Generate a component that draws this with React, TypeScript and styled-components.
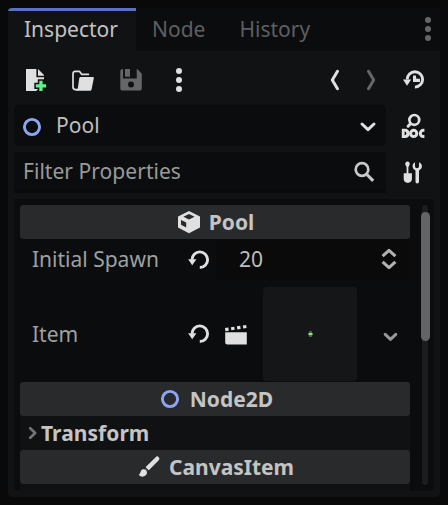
import React from "react";
import styled, { createGlobalStyle } from "styled-components";

const c = {
  base: "#090909",
  dark: "#0b0c0e",
  panel: "#111214",
  header: "#292a2c",
  icon: "#e0e0e0",
  muted: "#656668",
  accent: "#5b72c4",
  node: "#8da5f3",
};

const GlobalStyle = createGlobalStyle`
  * { box-sizing: border-box; }
  body {
    margin: 0;
    background: ${c.base};
    font-family: "Noto Sans", sans-serif;
    font-size: 21px;
    line-height: 30px;
    color: #bebebe;
  }
`;

const Dock = styled.main`
  width: 432px;
  height: 489px;
  margin: 8px;
  display: flex;
  flex-direction: column;
  background: ${c.panel};
  border-radius: 4px;
  overflow: hidden;
  white-space: nowrap;
`;

const TabBar = styled.div`
  height: 43px;
  flex: none;
  display: flex;
  background: ${c.dark};
`;

const Tab = styled.div<{ $active?: boolean }>`
  height: 43px;
  padding: 6px 18px 0 16px;
  border-top: 3px solid ${(p) => (p.$active ? c.accent : "transparent")};
  width: ${(p) => (p.$active ? "128px" : "auto")};
  background: ${(p) => (p.$active ? c.panel : "transparent")};
  color: ${(p) => (p.$active ? "#c2c2c2" : "#5e5f60")};
  line-height: 25px;
`;

const TabMenu = styled.div`
  margin: 9px 0 0 auto;
  display: flex;
`;

const Toolbar = styled.div`
  height: 54px;
  flex: none;
  display: flex;
  align-items: center;
  gap: 24px;
  padding: 4px 15px 0;
`;

const ToolGroup = styled.div<{ $gap: number }>`
  display: flex;
  gap: ${(p) => p.$gap}px;
  margin-left: auto;
`;

const FieldRow = styled.div`
  display: flex;
  flex: none;
  height: 41px;
  margin: 0 15px 6px 6px;
  justify-content: space-between;
  align-items: center;
`;

const Field = styled.div<{ $line?: boolean }>`
  width: 372px;
  height: 41px;
  border-radius: ${(p) => (p.$line ? "3px 3px 0 0" : "4px")};
  border-bottom: ${(p) => (p.$line ? "3px solid #090a0b" : "0")};
  background: ${c.dark};
  display: flex;
  align-items: center;
  padding: ${(p) => (p.$line ? "0 10px 0 9px" : "0 6px")};
  color: ${(p) => (p.$line ? "#999a9a" : "#bebebe")};
`;

const FieldText = styled.span<{ $indent?: boolean }>`
  flex: 1;
  margin-left: ${(p) => (p.$indent ? "12px" : "0")};
  padding-bottom: ${(p) => (p.$indent ? "2px" : "0")};
  letter-spacing: 0.04px;
`;

const Scroller = styled.section`
  width: 420px;
  height: 292px;
  margin: 0 6px;
  padding: 6px 6px 0;
  display: flex;
  justify-content: space-between;
  background: ${c.dark};
  border-radius: 4px;
`;

const Properties = styled.div`
  width: 390px;
  height: 286px;
  display: flex;
  flex-direction: column;
`;

const Category = styled.h2`
  margin: 0;
  height: 34px;
  flex: none;
  display: flex;
  align-items: center;
  justify-content: center;
  gap: 8px;
  padding-left: 1px;
  font-size: 21px;
  line-height: 34px;
  font-weight: 700;
  color: #c4c4c4;
  background: ${c.header};
  border-radius: 3px;
`;

const Property = styled.div<{ $h: number; $gap?: number }>`
  height: ${(p) => p.$h}px;
  margin-bottom: ${(p) => p.$gap || 0}px;
  flex: none;
  display: flex;
  align-items: center;
  color: #9fa0a0;
`;

const Label = styled.span<{ $raised?: boolean }>`
  width: 167px;
  padding-left: 12px;
  padding-bottom: ${(p) => (p.$raised ? "2px" : "0")};
  flex: none;
`;

const SpinBox = styled.div`
  flex: 1;
  height: 41px;
  margin-left: 5px;
  padding: 0 9px 2px 23px;
  display: flex;
  align-items: center;
  justify-content: space-between;
  background: #0a0a0a;
  border-radius: 4px;
  color: #bebebe;
`;

const Preview = styled.div`
  width: 94px;
  height: 94px;
  margin: 0 22px 0 16px;
  display: grid;
  place-items: center;
  background: #151618;
  border-radius: 4px;
`;

const Fold = styled.div`
  height: 34px;
  flex: none;
  display: flex;
  align-items: center;
  padding-left: 5px;
  background: #101113;
  font-weight: 700;
  letter-spacing: 0.05px;
  color: #c4c4c4;
`;

const Filler = styled.div`
  flex: 1;
  background: #101113;
`;

const Track = styled.div`
  width: 6px;
  height: 280px;
  background: #1b1c1e;
  border-radius: 3px;
  display: flex;
  justify-content: center;
`;

const Thumb = styled.div`
  width: 9px;
  height: 129px;
  flex: none;
  margin-top: 7px;
  background: #636466;
  border-radius: 4.5px;
`;

const Svg = styled.svg<{ $dy?: number }>`
  display: block;
  flex: none;
  margin-top: ${(p) => p.$dy || 0}px;
`;

type IconProps = { children: React.ReactNode; w?: number; h?: number; dy?: number };
const Icon = ({ children, w = 24, h = 24, dy }: IconProps) => (
  <Svg width={w} height={h} viewBox={`0 0 ${w} ${h}`} fill="none" $dy={dy}>
    {children}
  </Svg>
);

const line = { strokeLinecap: "round" as const, strokeLinejoin: "round" as const, strokeWidth: 3 };

const Dots = ({ color }: { color: string }) => (
  <Icon>
    {[3, 12, 21].map((y) => (
      <circle key={y} cx="12" cy={y} r="3" fill={color} />
    ))}
  </Icon>
);

const NodeRing = ({ dy }: { dy?: number }) => (
  <Icon dy={dy}>
    <circle cx="12" cy="12" r="7.6" stroke={c.node} strokeWidth="2.9" />
  </Icon>
);

const Revert = () => (
  <Icon>
    <path d="M5 11.7a7.8 7.8 0 1 1 7.8 7.8" stroke={c.icon} strokeWidth="2.9" />
    <path d="M1.1 11.2h8.3l-4.2 6z" fill={c.icon} />
  </Icon>
);

export default function App() {
  return (
    <>
      <GlobalStyle />
      <Dock>
        <TabBar>
          <Tab $active>Inspector</Tab>
          <Tab>Node</Tab>
          <Tab>History</Tab>
          <TabMenu>
            <Dots color={c.muted} />
          </TabMenu>
        </TabBar>

        <Toolbar>
          <Icon>
            <path d="M3 1h10.4v8.2H21V17l-8 6H3z" fill={c.icon} />
            <path d="M15 1l6 6v.8h-6z" fill={c.icon} />
            <path
              d="M16.3 12.8h3.3v3.5h3.5v3.3h-3.5v3.5h-3.3v-3.5h-3.5v-3.3h3.5z"
              fill="#62f088"
              stroke={c.panel}
              strokeWidth="3"
              paintOrder="stroke"
            />
          </Icon>
          <Icon>
            <path
              d="M7.2 21.6H4.5A2.6 2.6 0 0 1 2 19V5.6A2.4 2.4 0 0 1 4.4 3.4h4.2l2.2 3h6.6"
              stroke={c.icon}
              strokeWidth="1.7"
              strokeLinejoin="round"
              strokeLinecap="round"
            />
            <path d="M9.5 9h12.3a1 1 0 0 1 1 1.2l-2.2 11a1.8 1.8 0 0 1-1.8 1.5H4.8C6.4 22 6.7 21 7 19l1.2-8.6A1.5 1.5 0 0 1 9.5 9z" fill={c.icon} />
          </Icon>
          <Icon>
            <path
              d="M4 1v9.5h13.7V1h.6l4.5 4.7V20a2.6 2.6 0 0 1-2.6 2.6H4A2.6 2.6 0 0 1 1.3 20V3.6A2.6 2.6 0 0 1 4 1z"
              fill={c.muted}
            />
            <path d="M6 1h5v7.8H6z" fill={c.muted} />
            <circle cx="12" cy="16.5" r="3" fill={c.panel} />
          </Icon>
          <Dots color={c.icon} />
          <ToolGroup $gap={12}>
            <Icon>
              <path d="M20.5 3.3L15.3 12l5.2 8.7" stroke={c.icon} {...line} />
            </Icon>
            <Icon>
              <path d="M15.5 3.3l5.2 8.7-5.2 8.7" stroke={c.muted} {...line} />
            </Icon>
          </ToolGroup>
          <Icon>
            <path d="M6.2 11.4a7.7 7.7 0 1 1 7.7 7.7" stroke={c.icon} strokeWidth="2.9" />
            <path d="M2 11.6h8.2L6 17.8z" fill={c.icon} />
            <path d="M12 7.5h2.8l.6 3.2H19V14h-7z" fill={c.icon} />
          </Icon>
        </Toolbar>

        <FieldRow>
          <Field>
            <NodeRing dy={2} />
            <FieldText $indent>Pool</FieldText>
            <Icon dy={3}>
              <path d="M6 9l6 5.7L18 9" stroke={c.icon} {...line} />
            </Icon>
          </Field>
          <Icon h={27}>
            <circle cx="13.3" cy="7.9" r="4.9" stroke={c.icon} strokeWidth="2.7" />
            <path d="M9.6 11.6l-2.5 2.6" stroke={c.icon} strokeWidth="3" strokeLinecap="round" />
            <path
              fillRule="evenodd"
              d="M.8 16.8h3.4a4.6 4.6 0 0 1 0 9.2H.8zM3.6 19.6v3.6a1.8 1.8 0 0 0 0-3.6z"
              fill={c.icon}
            />
            <circle cx="12.7" cy="21.4" r="3.1" stroke={c.icon} strokeWidth="3" />
            <path d="M23.4 18.3h-1a3.1 3.1 0 0 0 0 6.2h1" stroke={c.icon} strokeWidth="3" />
          </Icon>
        </FieldRow>

        <FieldRow>
          <Field $line>
            <FieldText>Filter Properties</FieldText>
            <Icon dy={1}>
              <circle cx="10" cy="9.5" r="6.3" stroke="#c8c8c8" strokeWidth="2.7" />
              <path d="M14.4 14l6.8 6.9" stroke="#c8c8c8" strokeWidth="3.1" />
            </Icon>
          </Field>
          <Icon h={25}>
            <path d="M6.5 1.6c1.7 0 2.4 1.4 2.2 3L7.4 7.3v5.9h3.5v6.4a4.2 4.2 0 0 1-8.2 0v-6.4h2.9V7.3L4.3 4.6c-.2-1.6.5-3 2.2-3z" fill={c.icon} />
            <path d="M14 2.3v3.9a2 2 0 0 0 4 0V2.3c1.9.8 2.9 2.3 2.9 4 0 1.9-1 3.2-2.9 4.1v11.4a1.7 1.7 0 0 1-3.5 0V10.4c-1.9-.9-2.9-2.2-2.9-4.1 0-1.7.8-3.2 2.4-4z" fill={c.icon} />
          </Icon>
        </FieldRow>

        <Scroller>
          <Properties>
            <Category>
              <Icon>
                <path
                  fillRule="evenodd"
                  d="M12 1l11 5.5v11L12 23.2 1 17.5v-11zM12 4L6.4 6.8 12 9.6l5.6-2.8zM4 10v4.8l5.2 2.7v-5z"
                  fill={c.icon}
                />
              </Icon>
              Pool
            </Category>
            <Property $h={41} $gap={7}>
              <Label $raised>Initial Spawn</Label>
              <Revert />
              <SpinBox>
                20
                <Icon>
                  <path d="M5.6 9.2L12 3.3l6.4 5.9M5.6 14.8l6.4 5.9 6.4-5.9" stroke="#b2b2b2" strokeWidth="3" strokeLinejoin="round" />
                </Icon>
              </SpinBox>
            </Property>
            <Property $h={94} $gap={1}>
              <Label>Item</Label>
              <Revert />
              <Icon w={36}>
                <path d="M14.2 10.2h21.6v12.2H16.2a2 2 0 0 1-2-2z" fill={c.icon} />
                <path d="M14.2 7.6l21.8-3.2" stroke={c.icon} strokeWidth="3.1" strokeDasharray="3.4 2.6" />
              </Icon>
              <Preview>
                <Icon w={8} h={8}>
                  <path d="M3 1h3v6H3z" fill="#34694a" />
                  <path d="M2 3h5v2.2H2z" fill="#4a8a5c" />
                  <path d="M3 3h3v2H3z" fill="#b8cf58" />
                </Icon>
              </Preview>
              <Icon dy={5}>
                <path d="M6.2 9.3l5.3 5 5.3-5" stroke="#989898" {...line} />
              </Icon>
            </Property>
            <Category>
              <NodeRing />
              Node2D
            </Category>
            <Fold>
              <Icon w={16}>
                <path d="M5.2 7.2l5 4.8-5 4.8" stroke="#747474" {...line} strokeWidth={2.6} />
              </Icon>
              Transform
            </Fold>
            <Category>
              <Icon>
                <path d="M20.2 3.7L10.5 13.4" stroke={c.icon} strokeWidth="4.4" strokeLinecap="round" />
                <path d="M6.2 10.8l6.4 6.4" stroke={c.header} strokeWidth="1.4" />
                <path d="M6 14.2c2.6-.2 4.4 1.6 4 3.9-.7 3.6-5.6 5-8.4 1.7 2.2-.5 1.4-5.1 4.4-5.6z" fill={c.icon} />
              </Icon>
              CanvasItem
            </Category>
            <Filler />
          </Properties>
          <Track>
            <Thumb />
          </Track>
        </Scroller>
      </Dock>
    </>
  );
}
